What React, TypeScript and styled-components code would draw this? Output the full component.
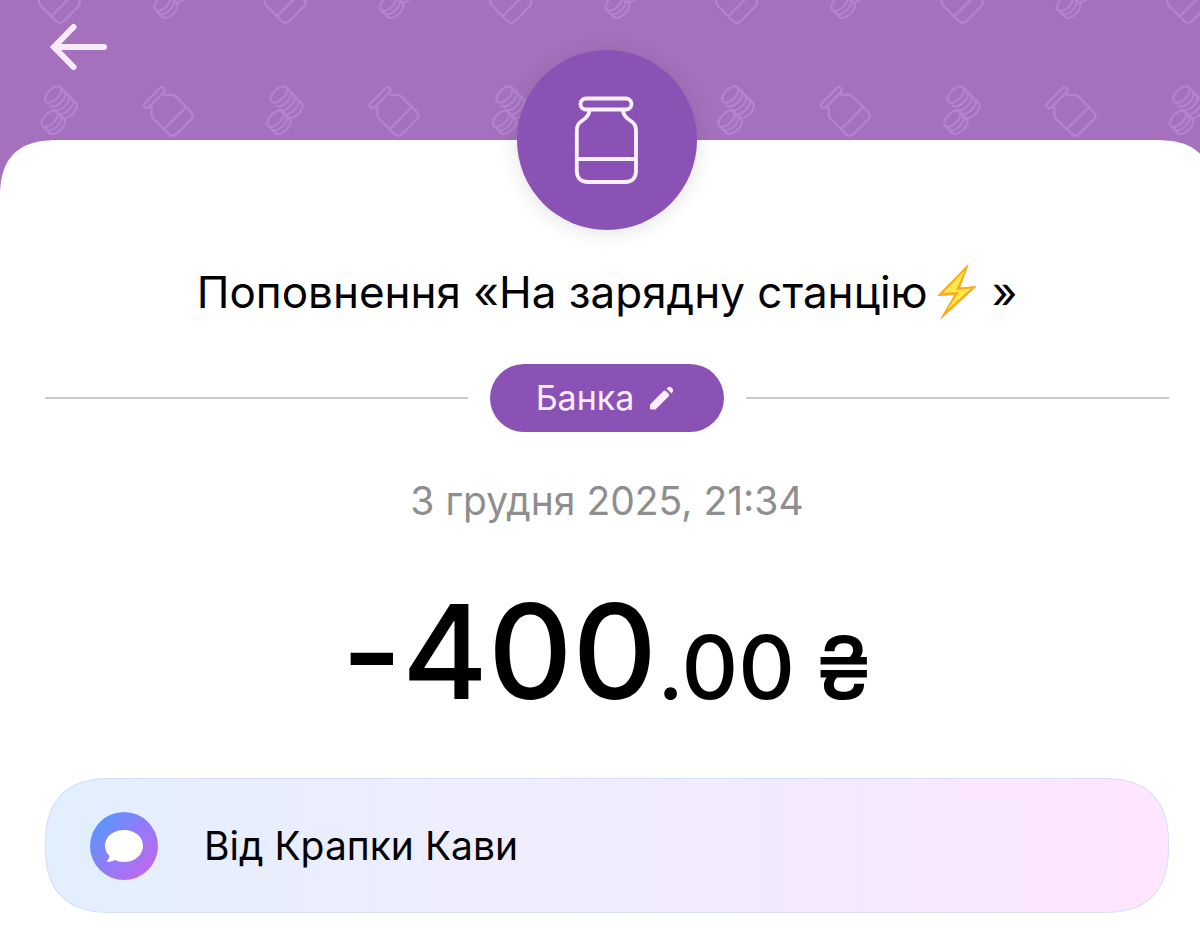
import React from "react";
import styled, { createGlobalStyle } from "styled-components";

const GlobalStyle = createGlobalStyle`
  *, *::before, *::after { box-sizing: border-box; }
  html, body, #root { min-height: 100vh; }
  body {
    margin: 0;
    overflow-x: hidden;
    background: #fff;
    color: #000;
    font-family: Inter, "Noto Sans", sans-serif;
  }
  #root { display: flex; flex-direction: column; }
  button { font: inherit; border: 0; cursor: pointer; }
`;

const Screen = styled.main`
  flex: 1;
  position: relative;
  display: flex;
  flex-direction: column;
  margin-right: -14px;
  background: #a571be;
`;

const Backdrop = styled.svg`
  position: absolute;
  inset: 0 0 auto 0;
  width: 100%;
  height: 200px;
`;

const TopBar = styled.header`
  position: relative;
  height: 140px;
  padding: 20px 46px;
`;

const BackButton = styled.button`
  display: flex;
  padding: 0;
  background: none;
`;

const Sheet = styled.section`
  position: relative;
  flex: 1;
  display: flex;
  flex-direction: column;
  align-items: center;
  padding: 0 45px 37px;
  background: #fff;
  border-radius: 48px 48px 0 0;
  @supports (corner-shape: superellipse(1.4)) {
    border-radius: 60px 60px 0 0;
    corner-shape: superellipse(1.4);
  }
`;

const JarBadge = styled.div`
  display: grid;
  place-items: center;
  width: 180px;
  height: 180px;
  margin-top: -90px;
  border-radius: 50%;
  background: #8a52b5;
  box-shadow: 0 2px 20px rgba(30, 40, 20, 0.14);
`;

const Title = styled.h1`
  display: flex;
  align-items: center;
  margin: 34px 0 44px;
  font-size: 44px;
  line-height: 56px;
  font-weight: 400;
  white-space: pre;
`;

const Bolt = styled.svg`
  margin: 0 14px 0 8px;
`;

const CategoryRow = styled.div`
  display: flex;
  align-items: center;
  gap: 22px;
  align-self: stretch;
`;

const Rule = styled.span`
  flex: 1;
  height: 2px;
  background: #cacaca;
`;

const CategoryButton = styled.button`
  display: flex;
  align-items: center;
  gap: 15px;
  height: 68px;
  padding: 0 49px 0 46px;
  border-radius: 34px;
  background: #8a52b5;
  color: #fdeeff;
  font-size: 34px;
  line-height: 44px;
`;

const DateText = styled.time`
  margin-top: 45px;
  font-size: 39px;
  line-height: 48px;
  color: #8e8e8e;
`;

const Amount = styled.p`
  display: flex;
  align-items: baseline;
  margin: 47px 0 46px;
  font-size: 131px;
  line-height: 160px;
  font-weight: 500;
  font-feature-settings: "calt" 0;
`;

const Fraction = styled.span`
  font-size: 88px;
  line-height: 88px;
`;

const Currency = styled.span`
  margin-left: 20px;
  font-size: 86px;
  line-height: 88px;
`;

const SenderCard = styled.div`
  display: flex;
  align-items: center;
  gap: 46px;
  align-self: stretch;
  height: 135px;
  padding: 0 44px;
  border: 1px solid #d5def5;
  border-radius: 54px;
  background: linear-gradient(90deg, #e2effd 0%, #efedfe 40%, #f4e9fe 68%, #fee6fe 100%);
  font-size: 39px;
  line-height: 48px;
  @supports (corner-shape: superellipse(1.3)) {
    border-radius: 66px;
    corner-shape: superellipse(1.3);
  }
`;

function JarShape() {
  return (
    <>
      <rect x="6.5" y="3.5" width="51" height="11" rx="5.5" />
      <path d="M15.5 14.5C15.5 20 13 22.500 9 25C4.500 28 2.800 30 2.800 36V76C2.800 83 7 87 14 87H51C58 87 62 83 62 76V36C62 30 60 28 55.500 25C51.500 22.500 49 20 49 14.500" />
      <path d="M3 64H62" />
    </>
  );
}

function CoinStack({ x, y, arcs }: { x: number; y: number; arcs: number[] }) {
  const end = arcs[arcs.length - 1];
  return (
    <g transform={`translate(${x} ${y}) rotate(45)`}>
      <ellipse rx="5.500" ry="10.200" />
      {arcs.map((a) => (
        <path key={a} d={`M${a} -10.200A5.500 10.200 0 0 1 ${a} 10.200`} />
      ))}
      <path d={`M0 -10.200H${end}M${end > 12 ? 12 : 0} 10.200H${end}`} />
    </g>
  );
}

function PatternMotif({ coinX, coinY, jarX, jarY }: { coinX: number; coinY: number; jarX: number; jarY: number }) {
  return (
    <>
      <g transform={`translate(${coinX} ${coinY})`}>
        <CoinStack x={-6.800} y={-15.500} arcs={[5.5, 11, 16.5, 22]} />
        <CoinStack x={-10.300} y={8.700} arcs={[5, 10]} />
      </g>
      <g transform={`translate(${jarX} ${jarY}) rotate(-45) scale(0.53) translate(-32.500 -45)`} strokeWidth="4">
        <JarShape />
      </g>
    </>
  );
}

function PatternBackdrop() {
  return (
    <Backdrop aria-hidden="true">
      <defs>
        <pattern id="money" width="225.670" height="200" patternUnits="userSpaceOnUse">
          <g fill="none" stroke="#b584d0" strokeWidth="2" strokeLinecap="round" strokeLinejoin="round">
            <PatternMotif coinX={60} coinY={110} jarX={168} jarY={111} />
            <PatternMotif coinX={172.800} coinY={-6} jarX={55.300} jarY={-2} />
          </g>
        </pattern>
      </defs>
      <rect width="100%" height="200" fill="url(#money)" />
    </Backdrop>
  );
}

export default function App() {
  return (
    <>
      <GlobalStyle />
      <Screen>
        <PatternBackdrop />
        <TopBar>
          <BackButton type="button" aria-label="Назад">
            <svg width="64" height="54" viewBox="0 0 64 54" fill="none" stroke="#f8eafd" strokeWidth="6" strokeLinecap="round" strokeLinejoin="miter">
              <path d="M27.500 7L8 27L27.500 47M10 27H58" />
            </svg>
          </BackButton>
        </TopBar>
        <Sheet>
          <JarBadge>
            <svg width="66" height="90" viewBox="0 0 66 90" fill="none" stroke="#fdf0ff" strokeWidth="3.800" aria-hidden="true">
              <JarShape />
            </svg>
          </JarBadge>
          <Title>
            Поповнення «На зарядну станцію
            <Bolt width="42" height="56" viewBox="0 0 42 56" role="img" aria-label="Блискавка">
              <path d="M32 1L2 31.500L19 30.500L5 54.500L40 22.500L23.500 24Z" fill="#fbab1c" stroke="#fbab1c" strokeLinejoin="round" />
              <path d="M29 6L7 29L23 28L11 46L35 24.500L20 26Z" fill="#ffe84a" />
            </Bolt>
            »
          </Title>
          <CategoryRow>
            <Rule />
            <CategoryButton type="button">
              Банка
              <svg width="26" height="26" viewBox="0 0 26 26" fill="currentColor" aria-hidden="true">
                <path d="M1 19.500L14.500 6Q16 5 17.500 6.500L19.500 8.500Q21 10 19.500 11.500L6.500 24.500H2Q1 24.500 1 23.500Z" />
                <path d="M17.500 3.500Q20.500 .5 23 3Q25.500 5.500 22.500 8.500Z" />
              </svg>
            </CategoryButton>
            <Rule />
          </CategoryRow>
          <DateText dateTime="2025-12-03T21:34">3 грудня 2025, 21:34</DateText>
          <Amount>
            -400<Fraction>.00</Fraction>
            <Currency>₴</Currency>
          </Amount>
          <SenderCard>
            <svg width="68" height="68" viewBox="0 0 68 68" aria-hidden="true">
              <defs>
                <linearGradient id="chat" x1="0.100" y1="0.150" x2="0.900" y2="0.850">
                  <stop offset="0" stopColor="#5a96ff" />
                  <stop offset="0.500" stopColor="#8f7cf8" />
                  <stop offset="1" stopColor="#be68ee" />
                </linearGradient>
              </defs>
              <circle cx="34" cy="34" r="34" fill="url(#chat)" />
              <path d="M34 18C45 18 53 25 53 33.500C53 43 45 50 34 50C30.500 50 27.500 49 25 48C22.500 49.500 19.500 50 16.500 49.500C18 48 19.200 46 19.500 44C16.500 41 15 37.500 15 33.500C15 25 23 18 34 18Z" fill="#fff" />
            </svg>
            Від Крапки Кави
          </SenderCard>
        </Sheet>
      </Screen>
    </>
  );
}
